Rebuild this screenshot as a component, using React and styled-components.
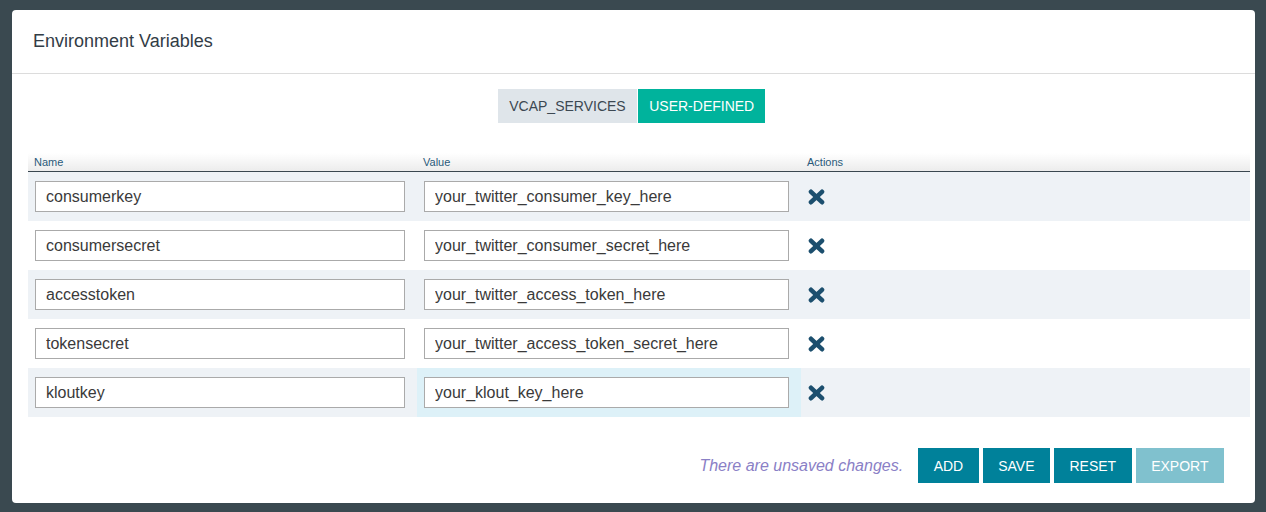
import styled, { createGlobalStyle } from "styled-components";

const GlobalStyle = createGlobalStyle`
  html, body {
    margin: 0;
    padding: 0;
    background: #3a4950;
    font-family: "Liberation Sans", Arial, sans-serif;
  }
`;

const variables = [
  { name: "consumerkey", value: "your_twitter_consumer_key_here" },
  { name: "consumersecret", value: "your_twitter_consumer_secret_here" },
  { name: "accesstoken", value: "your_twitter_access_token_here" },
  { name: "tokensecret", value: "your_twitter_access_token_secret_here" },
  { name: "kloutkey", value: "your_klout_key_here", focused: true },
];

function CrossIcon() {
  return (
    <svg width="17" height="16" viewBox="0 0 17 16">
      <g stroke="currentColor" strokeWidth="4.6" strokeLinecap="round">
        <line x1="3" y1="2.8" x2="14" y2="13.2" />
        <line x1="14" y1="2.8" x2="3" y2="13.2" />
      </g>
    </svg>
  );
}

function App() {
  return (
    <>
      <GlobalStyle />
      <Page>
        <Modal>
          <Header>
            <Title>Environment Variables</Title>
          </Header>

          <Tabs>
            <Tab>VCAP_SERVICES</Tab>
            <Tab $active>USER-DEFINED</Tab>
          </Tabs>

          <Table>
            <HeadRow>
              <HeadCell>Name</HeadCell>
              <HeadCell>Value</HeadCell>
              <HeadCell>Actions</HeadCell>
            </HeadRow>
            {variables.map((v, i) => (
              <Row key={v.name} $striped={i % 2 === 0}>
                <Cell>
                  <Input $width={370} defaultValue={v.name} />
                </Cell>
                <Cell $highlight={v.focused}>
                  <Input $width={365} defaultValue={v.value} />
                </Cell>
                <Cell>
                  <RemoveButton aria-label="Remove">
                    <CrossIcon />
                  </RemoveButton>
                </Cell>
              </Row>
            ))}
          </Table>

          <Footer>
            <Notice>There are unsaved changes.</Notice>
            <Buttons>
              <Button>ADD</Button>
              <Button>SAVE</Button>
              <Button>RESET</Button>
              <Button $disabled>EXPORT</Button>
            </Buttons>
          </Footer>
        </Modal>
      </Page>
    </>
  );
}

const Page = styled.div`
  width: 1266px;
  height: 512px;
  padding: 10px 11px 9px 12px;
  box-sizing: border-box;
`;

const Modal = styled.div`
  height: 100%;
  background: #fff;
  border-radius: 4px;
  display: flex;
  flex-direction: column;
`;

const Header = styled.div`
  height: 63px;
  border-bottom: 1px solid #dcdcdc;
  display: flex;
  align-items: center;
  padding: 0 21px;
`;

const Title = styled.h1`
  margin: 0;
  font-size: 18px;
  font-weight: normal;
  color: #323c46;
`;

const Tabs = styled.div`
  display: flex;
  justify-content: center;
  gap: 1px;
  margin-top: 15px;
  padding-right: 4px;
`;

const Tab = styled.div`
  height: 34px;
  display: flex;
  align-items: center;
  padding: 0 ${(p) => (p.$active ? "11px" : "11.5px")};
  font-size: 14px;
  background: ${(p) => (p.$active ? "#00b39c" : "#dfe5ea")};
  color: ${(p) => (p.$active ? "#fff" : "#3c4852")};
`;

const Table = styled.div`
  margin: 30px 5px 0 16px;
`;

const HeadRow = styled.div`
  display: grid;
  grid-template-columns: 389px 384px 1fr;
  height: 18px;
  background: linear-gradient(#ffffff, #ececec);
  border-bottom: 1px solid #3a4750;
`;

const HeadCell = styled.div`
  font-size: 11px;
  color: #2a5a7a;
  padding-left: 6px;
  line-height: 19px;
`;

const Row = styled.div`
  display: grid;
  grid-template-columns: 389px 384px 1fr;
  height: 49px;
  background: ${(p) => (p.$striped ? "#eef2f6" : "#fff")};
`;

const Cell = styled.div`
  display: flex;
  align-items: center;
  padding-left: 7px;
  background: ${(p) => (p.$highlight ? "#ddf1f8" : "transparent")};
`;

const Input = styled.input`
  width: ${(p) => p.$width}px;
  height: 31px;
  box-sizing: border-box;
  border: 1px solid #aaaaaa;
  padding: 0 10px;
  font-family: "Liberation Sans", Arial, sans-serif;
  font-size: 16px;
  color: #3a3a3a;
  background: #fff;
  outline: none;
`;

const RemoveButton = styled.button`
  border: none;
  background: none;
  padding: 0;
  display: flex;
  color: #1c4f6e;
  cursor: pointer;
`;

const Footer = styled.div`
  display: flex;
  justify-content: flex-end;
  align-items: center;
  gap: 15px;
  margin-top: 31px;
  padding-right: 31px;
`;

const Notice = styled.span`
  font-style: italic;
  font-size: 16px;
  color: #8a80c6;
`;

const Buttons = styled.div`
  display: flex;
  gap: 4px;
`;

const Button = styled.button`
  height: 35px;
  padding: 0 15.5px;
  border: none;
  font-family: "Liberation Sans", Arial, sans-serif;
  font-size: 14px;
  color: #fff;
  background: ${(p) => (p.$disabled ? "#80c1ce" : "#00819a")};
  cursor: ${(p) => (p.$disabled ? "default" : "pointer")};
`;

export default App;
